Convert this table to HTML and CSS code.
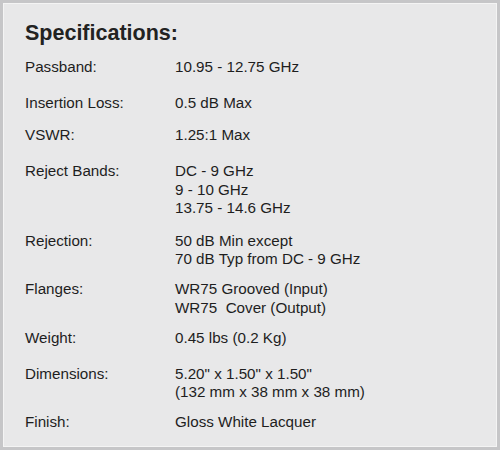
FILE: index.html
```html
<!DOCTYPE html>
<html>
<head>
<meta charset="utf-8">
<link rel="stylesheet" href="styles.css">
</head>
<body>
<div class="panel">
  <h2 class="title">Specifications:</h2>
  <div class="specs">
    <div class="row"><div class="label">Passband:</div><div class="value">10.95 - 12.75 GHz</div></div>
    <div class="row loose"><div class="label">Insertion Loss:</div><div class="value">0.5 dB Max</div></div>
    <div class="row mid"><div class="label">VSWR:</div><div class="value">1.25:1 Max</div></div>
    <div class="row loose"><div class="label">Reject Bands:</div><div class="value">DC - 9 GHz<br>9 - 10 GHz<br>13.75 - 14.6 GHz</div></div>
    <div class="row mid"><div class="label">Rejection:</div><div class="value">50 dB Min except<br>70 dB Typ from DC - 9 GHz</div></div>
    <div class="row"><div class="label">Flanges:</div><div class="value">WR75 Grooved (Input)<br>WR75&nbsp; Cover (Output)</div></div>
    <div class="row"><div class="label">Weight:</div><div class="value">0.45 lbs (0.2 Kg)</div></div>
    <div class="row loose"><div class="label">Dimensions:</div><div class="value">5.20" x 1.50" x 1.50"<br>(132 mm x 38 mm x 38 mm)</div></div>
    <div class="row"><div class="label">Finish:</div><div class="value">Gloss White Lacquer</div></div>
  </div>
</div>
</body>
</html>
```

FILE: styles.css
```css
html, body {
  margin: 0;
  padding: 0;
}
body {
  font-family: "Liberation Sans", Arial, sans-serif;
  color: #1e1e1e;
}
.panel {
  box-sizing: border-box;
  width: 500px;
  height: 450px;
  background: #e8e8e9;
  border: 3px solid #c6c6c8;
  box-shadow: inset 1px 1px 0 #f4f4f4, inset -1px -1px 0 #f4f4f4;
  padding: 17px 22px 0 22px;
}
.title {
  margin: 0 0 11.5px 0;
  font-size: 21.5px;
  line-height: 26px;
  font-weight: bold;
  color: #222;
}
.specs {
  display: flex;
  flex-direction: column;
  gap: 11.5px;
  font-size: 15.2px;
  line-height: 18.5px;
}
.row {
  display: grid;
  grid-template-columns: 150px 1fr;
}
.row.loose {
  margin-top: 6px;
}
.row.mid {
  margin-top: 2.5px;
}
```
